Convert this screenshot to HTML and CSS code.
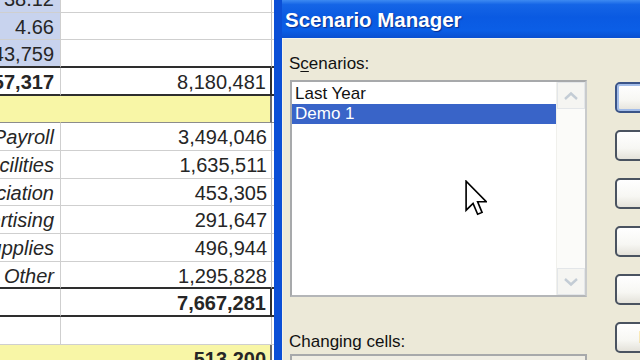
FILE: index.html
```html
<!DOCTYPE html>
<html>
<head>
<meta charset="utf-8">
<link rel="stylesheet" href="styles.css">
</head>
<body>
<div class="screen">
  <div class="sheet">
    <div class="row"><div class="c1 selc">38.12</div><div class="c2"></div><div class="c3"></div></div>
    <div class="row"><div class="c1 selc">4.66</div><div class="c2"></div><div class="c3"></div></div>
    <div class="row tb"><div class="c1 selc">43,759</div><div class="c2"></div><div class="c3"></div></div>
    <div class="row tb box"><div class="c1 bold">57,317</div><div class="c2">8,180,481</div><div class="c3"></div></div>
    <div class="row yel"><div class="c1"></div><div class="c2"></div><div class="c3"></div></div>
    <div class="row"><div class="c1 lbl">Payroll</div><div class="c2">3,494,046</div><div class="c3"></div></div>
    <div class="row"><div class="c1 lbl">Facilities</div><div class="c2">1,635,511</div><div class="c3"></div></div>
    <div class="row"><div class="c1 lbl">Depreciation</div><div class="c2">453,305</div><div class="c3"></div></div>
    <div class="row"><div class="c1 lbl">Advertising</div><div class="c2">291,647</div><div class="c3"></div></div>
    <div class="row"><div class="c1 lbl">Supplies</div><div class="c2">496,944</div><div class="c3"></div></div>
    <div class="row tb"><div class="c1 lbl">Other</div><div class="c2">1,295,828</div><div class="c3"></div></div>
    <div class="row tb box"><div class="c1"></div><div class="c2 bold">7,667,281</div><div class="c3"></div></div>
    <div class="row"><div class="c1"></div><div class="c2"></div><div class="c3"></div></div>
    <div class="row yel last"><div class="c1"></div><div class="c2 bold">513,200</div><div class="c3"></div></div>
  </div>

  <div class="dialog">
    <div class="titlebar"><span class="title">Scenario Manager</span></div>
    <div class="body">
      <div class="main">
        <div class="label">S<u>c</u>enarios:</div>
        <div class="listbox">
          <div class="items">
            <div class="item">Last Year</div>
            <div class="item sel">Demo 1</div>
          </div>
          <div class="scroll">
            <div class="sbtn">
              <svg width="16" height="10" viewBox="0 0 16 10"><path d="M2 8 L8 2.5 L14 8" fill="none" stroke="#c3ccd5" stroke-width="2.4"/></svg>
            </div>
            <div class="track"></div>
            <div class="sbtn">
              <svg width="16" height="10" viewBox="0 0 16 10"><path d="M2 2 L8 7.5 L14 2" fill="none" stroke="#c3ccd5" stroke-width="2.4"/></svg>
            </div>
          </div>
        </div>
        <div class="label changing">Changing cells:</div>
        <div class="field"></div>
      </div>
      <div class="buttons">
        <div class="btn default">Show</div>
        <div class="btn">Close</div>
        <div class="btn">Add...</div>
        <div class="btn">Delete</div>
        <div class="btn">Edit...</div>
        <div class="btn">Merge...</div>
      </div>
    </div>
  </div>

  <svg class="cursor" width="22" height="36" viewBox="0 0 12 19.5">
    <path d="M0.6 0.6 L0.6 16.4 L4.4 12.7 L6.9 18.6 L9.3 17.6 L6.9 11.8 L11.6 11.8 Z" fill="#fff" stroke="#000" stroke-width="0.9" stroke-linejoin="miter"/>
  </svg>
</div>
</body>
</html>
```

FILE: styles.css
```css
* { box-sizing: border-box; }

html, body {
  margin: 0;
  padding: 0;
}

body {
  width: 640px;
  height: 360px;
  overflow: hidden;
  background: #fff;
  font-family: "Liberation Sans", Arial, sans-serif;
}

.screen {
  position: relative;
  display: flex;
  width: 640px;
  height: 360px;
  overflow: hidden;
}

/* ---------- spreadsheet ---------- */
.sheet {
  flex: none;
  width: 274px;
  height: 360px;
  overflow: hidden;
  display: flex;
  flex-direction: column;
  background: #fff;
}

.sheet .row:first-child {
  margin-top: -15px;
}

.row {
  flex: none;
  height: 27.67px;
  display: flex;
}

.row > div {
  height: 100%;
  overflow: hidden;
  display: flex;
  justify-content: flex-end;
  align-items: flex-start;
  white-space: nowrap;
  font-size: 20px;
  line-height: 28px;
  color: #262626;
  border-bottom: 1px solid #cfcfcf;
}

.c1 {
  width: 61px;
  padding-right: 6px;
  border-right: 1px solid #cfcfcf;
}

.c2 {
  width: 211px;
  padding-right: 4px;
  border-right: 1px solid #bdbdbd;
}

.c3 {
  width: 2px;
}

.selc {
  background: #c8d3ee;
}

.lbl {
  font-style: italic;
}

.bold {
  font-weight: bold;
  color: #141414;
}

.row.tb > div {
  border-bottom: 2px solid #2e2e2e;
}

.row.box > .c2 {
  border-right: 2px solid #2e2e2e;
}

.row.yel > .c1,
.row.yel > .c2 {
  background: #f8f6a6;
}

.row.yel > .c1 {
  border-right-color: #f8f6a6;
}

.row.yel > div {
  border-bottom-color: #8c8c8c;
}

.row.yel > .c2 {
  border-right: 2px solid #6a6a6a;
}

.row.last > div {
  border-bottom: none;
}

/* ---------- dialog ---------- */
.dialog {
  flex: 1;
  height: 360px;
  display: flex;
  flex-direction: column;
  background: #ece9d8;
  border-left: 8px solid #0b4fd6;
  box-shadow: inset 1px 0 0 #5d95f0;
  overflow: hidden;
}

.titlebar {
  flex: none;
  height: 38px;
  margin-left: -8px;
  padding-left: 11px;
  display: flex;
  align-items: flex-start;
  background: linear-gradient(to bottom, #3d8af2 0%, #1565e6 12%, #0a5ae2 45%, #0b5ee6 80%, #0a4fd0 100%);
}

.title {
  margin-top: 8px;
  font-size: 20.5px;
  font-weight: bold;
  line-height: 24px;
  color: #fff;
  white-space: nowrap;
  text-shadow: 1px 1px 1px #0b2f8f;
}

.body {
  flex: 1;
  display: flex;
  align-items: flex-start;
  padding-left: 7px;
  border-top: 1px solid #f6f4ea;
  box-shadow: inset 1px 0 0 #f4f2e8;
}

.main {
  flex: none;
  width: 298px;
  display: flex;
  flex-direction: column;
  padding-top: 15px;
}

.label {
  font-size: 17px;
  line-height: 20px;
  color: #111;
  white-space: nowrap;
}

.label u {
  text-decoration-thickness: 1px;
  text-underline-offset: 2px;
}

.listbox {
  margin-top: 6px;
  margin-left: 1px;
  width: 297px;
  height: 217px;
  border: 2px solid #a7a9ab;
  border-right-color: #c9cbcc;
  border-bottom-color: #b4b6b8;
  background: #fff;
  display: flex;
}

.items {
  flex: 1;
  padding-top: 2px;
}

.item {
  height: 20px;
  padding-left: 3px;
  font-size: 17px;
  line-height: 20px;
  color: #111;
  white-space: nowrap;
}

.item.sel {
  background: #3964c8;
  color: #fff;
}

.scroll {
  flex: none;
  width: 29px;
  display: flex;
  flex-direction: column;
  background: #fbfbf9;
  border-left: 1px solid #f0f0ec;
}

.sbtn {
  flex: none;
  height: 27px;
  display: flex;
  align-items: center;
  justify-content: center;
  background: #f5f5f2;
  border: 1px solid #e3e6e9;
}

.track {
  flex: 1;
}

.changing {
  margin-top: 35px;
}

.field {
  margin-top: 2px;
  margin-left: 1px;
  width: 297px;
  height: 26px;
  border: 2px solid #a7a9ab;
  background: #f0eee4;
}

.buttons {
  flex: none;
  margin-left: 28px;
  margin-top: 43px;
  display: flex;
  flex-direction: column;
  gap: 17px;
}

.btn {
  width: 110px;
  height: 31px;
  border: 2px solid #4a5360;
  border-radius: 5px;
  background: linear-gradient(to bottom, #ffffff 0%, #f7f7f3 60%, #e4e2da 100%);
  font-size: 17px;
  line-height: 27px;
  text-align: center;
  color: #000;
  white-space: nowrap;
}

.btn.default {
  border-color: #3a5488;
  box-shadow: inset 0 0 0 2px #a3bde9;
}

/* ---------- mouse cursor (overlay) ---------- */
.cursor {
  position: absolute;
  left: 465px;
  top: 180px;
}
```
